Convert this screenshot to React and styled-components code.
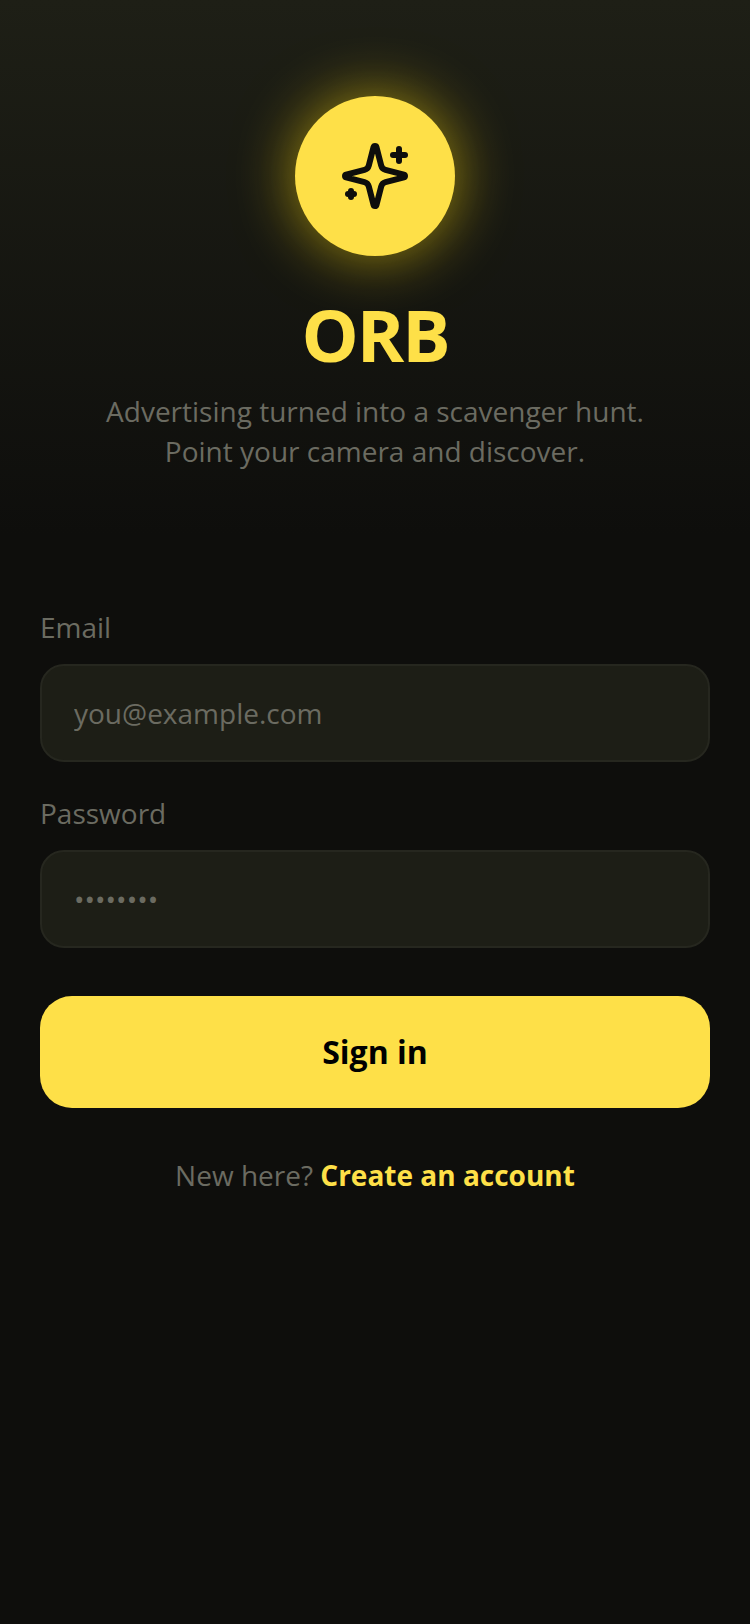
import { useState } from "react";
import styled, { createGlobalStyle } from "styled-components";

const GlobalStyle = createGlobalStyle`
  * {
    box-sizing: border-box;
  }
  body {
    margin: 0;
    background: #0e0e0c;
    color: #6b6b61;
    font-family: "Open Sans", "Noto Sans", sans-serif;
    font-size: 28px;
    line-height: 40px;
  }
`;

function SparklesIcon() {
  return (
    <svg
      width="72"
      height="72"
      viewBox="0 0 24 24"
      fill="none"
      stroke="currentColor"
      strokeWidth="2"
      strokeLinecap="round"
      strokeLinejoin="round"
      aria-hidden="true"
    >
      <path d="M9.937 15.5A2 2 0 0 0 8.5 14.063l-6.135-1.582a.5.5 0 0 1 0-.962L8.5 9.936A2 2 0 0 0 9.937 8.5l1.582-6.135a.5.5 0 0 1 .963 0L14.063 8.5A2 2 0 0 0 15.5 9.937l6.135 1.581a.5.5 0 0 1 0 .964L15.5 14.063a2 2 0 0 0-1.437 1.437l-1.582 6.135a.5.5 0 0 1-.963 0z" />
      <path d="M20 3v4" />
      <path d="M22 5h-4" />
      <path d="M4 17v2" />
      <path d="M5 18H3" />
    </svg>
  );
}

function App() {
  const [email, setEmail] = useState("");
  const [password, setPassword] = useState("");

  return (
    <Page>
      <GlobalStyle />
      <Hero>
        <Orb>
          <SparklesIcon />
        </Orb>
        <Title>ORB</Title>
        <Tagline>
          Advertising turned into a scavenger hunt.
          <br />
          Point your camera and discover.
        </Tagline>
      </Hero>
      <Form onSubmit={(e) => e.preventDefault()}>
        <Field>
          <Label htmlFor="email">Email</Label>
          <Input
            id="email"
            type="email"
            placeholder="you@example.com"
            value={email}
            onChange={(e) => setEmail(e.target.value)}
          />
        </Field>
        <Field>
          <Label htmlFor="password">Password</Label>
          <Input
            id="password"
            type="password"
            placeholder="••••••••"
            value={password}
            onChange={(e) => setPassword(e.target.value)}
          />
        </Field>
        <SubmitButton type="submit">Sign in</SubmitButton>
      </Form>
      <Footer>
        New here? <SignupLink href="#signup">Create an account</SignupLink>
      </Footer>
    </Page>
  );
}

export default App;

const Page = styled.main`
  min-height: 100vh;
  display: flex;
  flex-direction: column;
`;

const Hero = styled.header`
  display: flex;
  flex-direction: column;
  align-items: center;
  padding: 96px 40px 64px;
  text-align: center;
  background: linear-gradient(180deg, #1e1f16 0%, #0e0e0c 100%);
`;

const Orb = styled.div`
  width: 160px;
  height: 160px;
  display: flex;
  align-items: center;
  justify-content: center;
  border-radius: 50%;
  background: #fee048;
  color: #0e0e0c;
  box-shadow: 0 0 60px rgba(254, 218, 10, 0.6);
`;

const Title = styled.h1`
  margin: 38px 0 17px;
  color: #fee048;
  font-size: 72px;
  font-weight: 700;
  line-height: 80px;
  letter-spacing: -2px;
`;

const Tagline = styled.p`
  margin: 0;
`;

const Form = styled.form`
  display: flex;
  flex-direction: column;
  gap: 32px;
  padding: 73px 40px 0;
`;

const Field = styled.div`
  display: flex;
  flex-direction: column;
  gap: 18px;
`;

const Label = styled.label`
  display: block;
  line-height: 38px;
`;

const Input = styled.input`
  width: 100%;
  height: 98px;
  padding: 0 32px;
  border: 2px solid #26271f;
  border-radius: 24px;
  background: #1d1e16;
  color: #f5f5ea;
  font: inherit;
  outline: none;

  &::placeholder {
    color: #6b6b61;
    opacity: 1;
  }
  &:focus {
    border-color: #fee048;
  }
`;

const SubmitButton = styled.button`
  height: 112px;
  margin-top: 16px;
  border: 0;
  border-radius: 32px;
  background: #fee048;
  color: #000;
  font: inherit;
  font-size: 32px;
  font-weight: 700;
  cursor: pointer;
`;

const Footer = styled.p`
  margin: 48px 40px;
  line-height: 38px;
  text-align: center;
`;

const SignupLink = styled.a`
  color: #fee048;
  font-weight: 700;
  text-decoration: none;
`;
